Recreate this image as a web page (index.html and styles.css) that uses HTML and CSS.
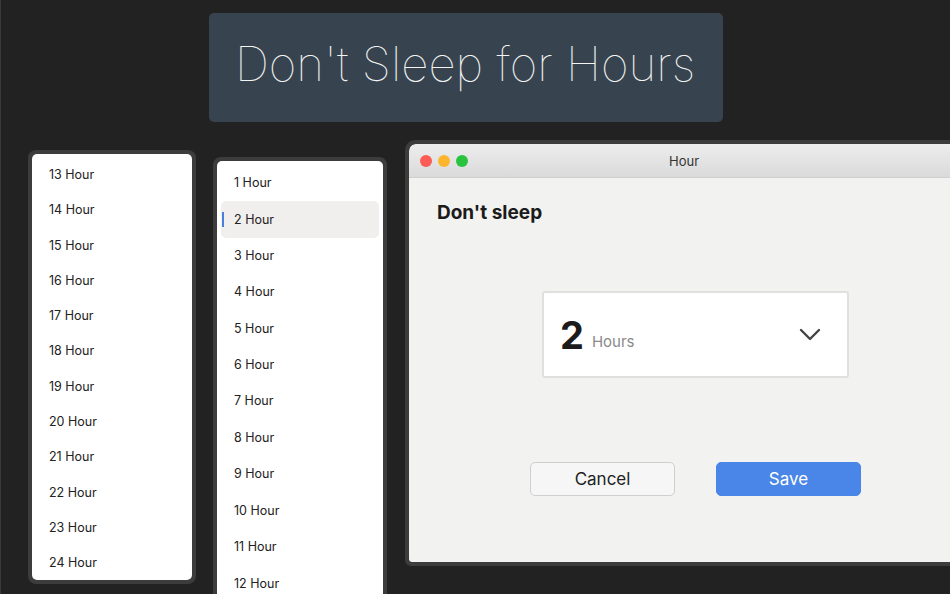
FILE: index.html
```html
<!DOCTYPE html>
<html>
<head>
<meta charset="utf-8">
<link rel="stylesheet" href="styles.css">
</head>
<body>
<div class="page">
  <div class="banner"><span class="banner-text">Don't Sleep for Hours</span></div>
  <div class="row">
    <div class="card card-a">
      <div class="list list-a">
        <div class="item">13 Hour</div>
        <div class="item">14 Hour</div>
        <div class="item">15 Hour</div>
        <div class="item">16 Hour</div>
        <div class="item">17 Hour</div>
        <div class="item">18 Hour</div>
        <div class="item">19 Hour</div>
        <div class="item">20 Hour</div>
        <div class="item">21 Hour</div>
        <div class="item">22 Hour</div>
        <div class="item">23 Hour</div>
        <div class="item">24 Hour</div>
      </div>
    </div>
    <div class="card card-b">
      <div class="list list-b">
        <div class="item">1 Hour</div>
        <div class="item selected"><span class="indicator"></span>2 Hour</div>
        <div class="item">3 Hour</div>
        <div class="item">4 Hour</div>
        <div class="item">5 Hour</div>
        <div class="item">6 Hour</div>
        <div class="item">7 Hour</div>
        <div class="item">8 Hour</div>
        <div class="item">9 Hour</div>
        <div class="item">10 Hour</div>
        <div class="item">11 Hour</div>
        <div class="item">12 Hour</div>
      </div>
    </div>
    <div class="window">
      <div class="titlebar">
        <div class="lights">
          <span class="light red"></span>
          <span class="light yellow"></span>
          <span class="light green"></span>
        </div>
        <div class="title">Hour</div>
      </div>
      <div class="content">
        <h1 class="heading">Don't sleep</h1>
        <div class="select">
          <span class="num">2</span>
          <span class="unit">Hours</span>
          <svg class="chevron" width="22" height="14" viewBox="0 0 22 14"><path d="M2 2 L11 11 L20 2" fill="none" stroke="#444" stroke-width="2.4" stroke-linecap="round" stroke-linejoin="round"/></svg>
        </div>
        <div class="buttons">
          <button class="btn btn-cancel">Cancel</button>
          <button class="btn btn-save">Save</button>
        </div>
      </div>
    </div>
  </div>
</div>
</body>
</html>
```
FILE: styles.css
```css
html, body {
  margin: 0;
  padding: 0;
  background: #222222;
  width: 950px;
  height: 594px;
  overflow: hidden;
}
.page {
  width: 950px;
  height: 594px;
  overflow: hidden;
  box-sizing: border-box;
  border-left: 1px solid #3a3a3a;
  padding-top: 13px;
  font-family: "Inter", "DejaVu Sans", sans-serif;
}
.banner {
  margin-left: 208px;
  width: 514px;
  height: 109px;
  background: #37444f;
  border-radius: 5px;
  display: flex;
  align-items: center;
  justify-content: center;
}
.banner-text {
  font-family: "Inter", sans-serif;
  font-weight: 100;
  font-size: 47.5px;
  color: #f4f4f4;
  margin-top: -9px;
  margin-left: -2px;
}
.row {
  display: flex;
  align-items: flex-start;
  margin-top: 18px;
}
.card {
  border: 4px solid #3c3c3c;
  border-radius: 8px;
  background: #3c3c3c;
  flex: none;
}
.card-a {
  margin-left: 27px;
  margin-top: 10px;
  width: 160px;
}
.card-b {
  margin-left: 17px;
  margin-top: 17px;
  width: 166px;
  height: 440px;
}
.list {
  background: #ffffff;
  border-radius: 5px;
  box-sizing: border-box;
}
.list-a {
  height: 426px;
  padding-top: 3px;
}
.list-b {
  height: 440px;
  padding-top: 3px;
  border-radius: 5px 5px 0 0;
}
.item {
  font-size: 12.5px;
  color: #222;
  display: flex;
  align-items: center;
  position: relative;
}
.list-a .item {
  height: 35.27px;
  padding-left: 17px;
}
.list-b .item {
  height: 36.45px;
  margin: 0 4px;
  padding-left: 13px;
  border-radius: 5px;
}
.list-b .item.selected {
  background: #f0efee;
  height: 37px;
  margin-top: 1px;
  margin-bottom: -1.5px;
}
.indicator {
  position: absolute;
  left: 1px;
  top: 11px;
  width: 2px;
  height: 15px;
  background: #4a7fdc;
}
.window {
  margin-left: 18px;
  width: 560px;
  border: 4px solid #3c3c3c;
  border-right: none;
  border-radius: 10px 0 0 6px;
  background: #3c3c3c;
  flex: none;
  overflow: hidden;
}
.titlebar {
  height: 33px;
  background: linear-gradient(#ededed, #dadada);
  border-radius: 7px 0 0 0;
  border-bottom: 1px solid #cfcfcf;
  display: flex;
  align-items: center;
  position: relative;
}
.lights {
  display: flex;
  gap: 6px;
  margin-left: 11px;
}
.light {
  width: 12px;
  height: 12px;
  border-radius: 50%;
  display: block;
}
.red { background: #fd5b56; }
.yellow { background: #fcb62d; }
.green { background: #28c43f; }
.title {
  margin-left: 201px;
  font-size: 13px;
  color: #333;
  font-family: "Inter", sans-serif;
}
.content {
  background: #f2f2f1;
  height: 384px;
  box-sizing: border-box;
  padding-top: 23px;
  border-radius: 0 0 0 3px;
}
.heading {
  margin: 0 0 0 28px;
  font-size: 19px;
  font-weight: 700;
  color: #1b1b1b;
  line-height: 24px;
}
.select {
  margin-left: 133px;
  margin-top: 66px;
  width: 307px;
  height: 87px;
  box-sizing: border-box;
  background: #fff;
  border: 2px solid #e0e0e0;
  border-radius: 3px;
  display: flex;
  align-items: center;
  padding-left: 16px;
}
.num {
  font-size: 38px;
  font-weight: 700;
  color: #1b1b1b;
}
.unit {
  font-size: 15px;
  color: #8a8a8a;
  margin-left: 8px;
  margin-top: 14px;
}
.chevron {
  margin-left: auto;
  margin-right: 26px;
}
.buttons {
  display: flex;
  gap: 41px;
  margin-left: 121px;
  margin-top: 84px;
}
.btn {
  width: 145px;
  height: 34px;
  border-radius: 5px;
  font-family: "Inter", sans-serif;
  font-size: 17px;
  padding: 0;
  margin: 0;
}
.btn-cancel {
  background: #f6f6f6;
  border: 1px solid #cfcfcf;
  color: #222;
}
.btn-save {
  background: #4a86e8;
  border: 1px solid #4a86e8;
  color: #fff;
}
```
